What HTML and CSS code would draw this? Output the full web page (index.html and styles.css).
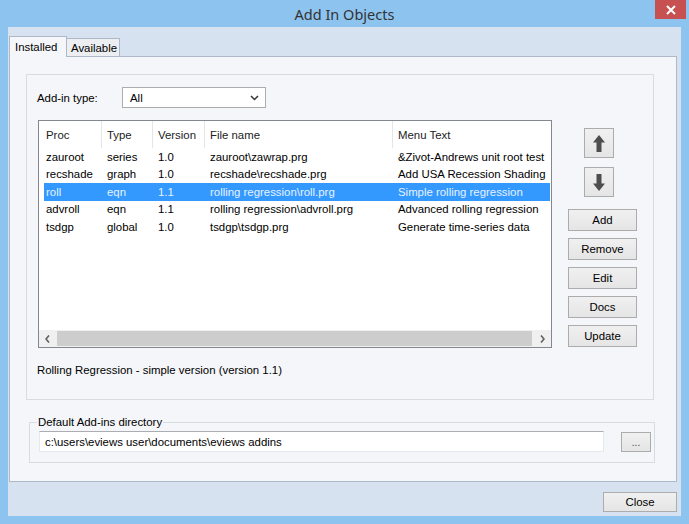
FILE: index.html
```html
<!DOCTYPE html>
<html lang="en">
<head>
    <meta charset="UTF-8">
    <title>Add In Objects</title>
    <link rel="stylesheet" href="styles.css">
</head>
<body>

<div class="window">
    <div class="titlebar">
        <span></span>
        <span class="title">Add In Objects</span>
        <span class="close-btn">
            <svg width="10" height="10" viewBox="0 0 10 10"><path d="M1 1 L9 9 M9 1 L1 9" stroke="#fff" stroke-width="2" fill="none"/></svg>
        </span>
    </div>

    <div class="client">
        <!-- Pestañas -->
        <div class="tabs">
            <div class="tab active">Installed</div>
            <div class="tab">Available</div>
        </div>

        <div class="tab-page">
            <div class="group">
                <div class="type-row">
                    <span class="type-label">Add-in type:</span>
                    <div class="select">
                        <span>All</span>
                        <svg width="9" height="6" viewBox="0 0 9 6"><path d="M1 1 L4.5 4.5 L8 1" stroke="#333" stroke-width="1.5" fill="none"/></svg>
                    </div>
                </div>

                <div class="list-area">
                    <div class="listview">
                        <div class="lv-header">
                            <span>Proc</span>
                            <span>Type</span>
                            <span>Version</span>
                            <span>File name</span>
                            <span>Menu Text</span>
                        </div>
                        <div class="lv-body">
                            <div class="lv-row">
                                <span>zauroot</span><span>series</span><span>1.0</span><span>zauroot\zawrap.prg</span><span>&amp;Zivot-Andrews unit root test</span>
                            </div>
                            <div class="lv-row">
                                <span>recshade</span><span>graph</span><span>1.0</span><span>recshade\recshade.prg</span><span>Add USA Recession Shading</span>
                            </div>
                            <div class="lv-row selected">
                                <span>roll</span><span>eqn</span><span>1.1</span><span>rolling regression\roll.prg</span><span>Simple rolling regression</span>
                            </div>
                            <div class="lv-row">
                                <span>advroll</span><span>eqn</span><span>1.1</span><span>rolling regression\advroll.prg</span><span>Advanced rolling regression</span>
                            </div>
                            <div class="lv-row">
                                <span>tsdgp</span><span>global</span><span>1.0</span><span>tsdgp\tsdgp.prg</span><span>Generate time-series data</span>
                            </div>
                        </div>
                        <div class="hscroll">
                            <span class="sb-btn">
                                <svg width="5" height="8" viewBox="0 0 5 8"><path d="M4 0.5 L1 4 L4 7.5" stroke="#606060" stroke-width="1.6" fill="none"/></svg>
                            </span>
                            <span class="sb-thumb"></span>
                            <span class="sb-btn">
                                <svg width="5" height="8" viewBox="0 0 5 8"><path d="M1 0.5 L4 4 L1 7.5" stroke="#606060" stroke-width="1.6" fill="none"/></svg>
                            </span>
                        </div>
                    </div>

                    <div class="side-buttons">
                        <button class="btn arrow-btn">
                            <svg width="12" height="17" viewBox="0 0 12 17"><path d="M6 0 L12 7.5 L8.5 7.5 L8.5 17 L3.5 17 L3.5 7.5 L0 7.5 Z" fill="#4d4d4d"/></svg>
                        </button>
                        <button class="btn arrow-btn down">
                            <svg width="12" height="17" viewBox="0 0 12 17"><path d="M6 17 L12 9.5 L8.5 9.5 L8.5 0 L3.5 0 L3.5 9.5 L0 9.5 Z" fill="#4d4d4d"/></svg>
                        </button>
                        <button class="btn side-btn first">Add</button>
                        <button class="btn side-btn">Remove</button>
                        <button class="btn side-btn">Edit</button>
                        <button class="btn side-btn">Docs</button>
                        <button class="btn side-btn">Update</button>
                    </div>
                </div>

                <div class="status">Rolling Regression - simple version (version 1.1)</div>
            </div>

            <fieldset class="dir-group">
                <legend>Default Add-ins directory</legend>
                <div class="dir-row">
                    <div class="dir-input">c:\users\eviews user\documents\eviews addins</div>
                    <button class="btn browse-btn">...</button>
                </div>
            </fieldset>
        </div>

        <div class="footer">
            <button class="btn close-dlg">Close</button>
        </div>
    </div>
</div>

</body>
</html>
```

FILE: styles.css
```css
* {
    box-sizing: border-box;
}

body {
    margin: 0;
    font-family: "Liberation Sans", Arial, sans-serif;
    font-size: 11.4px;
    color: #000;
}

.window {
    width: 689px;
    height: 524px;
    background-color: #8dc4ef;
    display: flex;
    flex-direction: column;
}

.titlebar {
    height: 27px;
    display: grid;
    grid-template-columns: 1fr auto 1fr;
    align-items: center;
}

.title {
    font-family: "Noto Sans", sans-serif;
    font-size: 14.5px;
    color: #333;
}

.close-btn {
    justify-self: end;
    align-self: start;
    width: 31px;
    height: 19px;
    margin-right: 3px;
    background-color: #c75050;
    display: flex;
    align-items: center;
    justify-content: center;
}

.client {
    flex: 1;
    margin: 0 8px 8px;
    background-color: #d6e2f0;
    padding: 9px 4px 4px 1px;
    display: flex;
    flex-direction: column;
}

/* Pestañas */
.tabs {
    height: 20px;
    display: flex;
    align-items: flex-end;
}

.tab {
    height: 18px;
    padding-left: 4px;
    width: 54px;
    margin-left: -1px;
    border: 1px solid #adb9c6;
    border-bottom: none;
    background-color: #eceef1;
    display: flex;
    align-items: center;
}

.tab.active {
    position: relative;
    z-index: 1;
    width: 58px;
    height: 21px;
    margin-left: 0;
    margin-bottom: -1px;
    padding-left: 5px;
    background-color: #f4f6f9;
}

.tab-page {
    height: 426px;
    border: 1px solid #adb9c6;
    background-color: #f4f6f9;
    display: flex;
    flex-direction: column;
}

.group {
    width: 628px;
    height: 326px;
    margin: 17px 0 0 16px;
    border: 1px solid #d7dce3;
}

.type-row {
    display: flex;
    align-items: center;
    padding: 12px 0 0 10px;
}

.type-label {
    width: 85px;
}

.select {
    width: 144px;
    height: 21px;
    border: 1px solid #acacac;
    background-color: #fff;
    display: flex;
    align-items: center;
    justify-content: space-between;
    padding: 0 6px 0 7px;
}

.list-area {
    display: flex;
    margin-top: 12px;
    padding-left: 11px;
}

.listview {
    width: 514px;
    height: 228px;
    border: 1px solid #828790;
    background-color: #fff;
    display: flex;
    flex-direction: column;
}

.lv-header {
    height: 27px;
    display: grid;
    grid-template-columns: 63px 51px 52px 188px 1fr;
    color: #222;
}

.lv-header span {
    display: flex;
    align-items: center;
    padding-left: 5px;
    border-right: 1px solid #e5e5e5;
}

.lv-header span:first-child {
    padding-left: 7px;
}

.lv-header span:last-child {
    border-right: none;
}

.lv-body {
    flex: 1;
}

.lv-row {
    height: 17.5px;
    margin: 0 1px 0 5px;
    display: grid;
    grid-template-columns: 58px 51px 52px 188px 1fr;
    align-items: center;
    white-space: nowrap;
}

.lv-row span {
    padding-left: 5px;
    overflow: hidden;
}

.lv-row span:first-child {
    padding-left: 2px;
}

.lv-row.selected {
    background-color: #3399ff;
    color: #e8f2ff;
}

.hscroll {
    height: 17px;
    display: flex;
    background-color: #f0f0f0;
}

.sb-btn {
    width: 17px;
    display: flex;
    align-items: center;
    justify-content: center;
}

.sb-thumb {
    flex: 1;
    margin: 1px 2px 1px 1px;
    background-color: #cdcdcd;
}

.btn {
    font-family: "Liberation Sans", Arial, sans-serif;
    font-size: 11.4px;
    color: #000;
    background: linear-gradient(#f0f0f0, #e5e5e5);
    border: 1px solid #acacac;
    padding: 0;
    display: flex;
    align-items: center;
    justify-content: center;
}

.side-buttons {
    display: flex;
    flex-direction: column;
    align-items: flex-start;
    margin-left: 16px;
    padding-top: 8px;
    gap: 7px;
}

.arrow-btn {
    width: 30px;
    height: 30px;
    margin-left: 16px;
}

.arrow-btn.down {
    margin-top: 2px;
}

.side-btn {
    width: 69px;
    height: 22px;
}

.side-btn.first {
    margin-top: 5px;
}

.status {
    margin-top: 15px;
    padding-left: 10px;
    line-height: 14px;
}

.dir-group {
    width: 626px;
    margin: 15px 0 0 19px;
    padding: 2px 0 10px 9px;
    border: 1px solid #d7dce3;
}

.dir-group legend {
    padding: 0 1px;
    margin-left: -2px;
    line-height: 14px;
}

.dir-row {
    display: flex;
    align-items: flex-start;
}

.dir-input {
    width: 565px;
    height: 21px;
    background-color: #fff;
    border: 1px solid #e3e9ef;
    border-top-color: #abadb3;
    padding-left: 5px;
    display: flex;
    align-items: center;
}

.browse-btn {
    width: 30px;
    height: 20px;
    margin: 1px 0 0 17px;
    font-size: 10px;
    color: #444;
}

.footer {
    display: flex;
    justify-content: flex-end;
    margin-top: 10px;
}

.close-dlg {
    width: 74px;
    height: 20px;
}
```
